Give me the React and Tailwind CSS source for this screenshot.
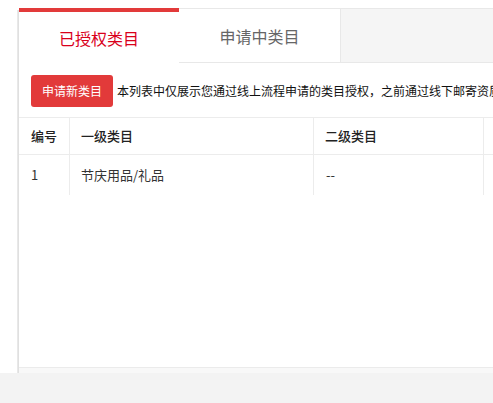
import React from "react";

const rows = [{ id: 1, first: "节庆用品/礼品", second: "--" }];

export default function App() {
  return (
    <div
      className="w-[493px] h-[403px] overflow-hidden bg-white flex flex-col"
      style={{ fontFamily: '"Noto Sans CJK SC", "Noto Sans", sans-serif' }}
    >
      <div className="flex-1 flex pl-[17px] pt-[8px] min-h-0">
        <div className="w-[2px] mt-[2px] bg-gradient-to-r from-[#ececec] to-[#dcdcdc]" />
        <div className="flex-1 flex flex-col min-w-0">
          {/* tabs */}
          <div className="flex h-[55px] shrink-0">
            <div className="w-[160px] border-t-4 border-[#e23a3a] bg-white flex items-center justify-center text-[16px] text-[#d9001b]">
              已授权类目
            </div>
            <div className="w-[162px] border-t border-b border-r border-[#e8e8e8] bg-white flex items-center justify-center text-[16px] text-[#666]">
              申请中类目
            </div>
            <div className="flex-1 border-t border-b border-[#e8e8e8] bg-[#f5f5f5]" />
          </div>

          {/* content */}
          <div className="h-[304px] bg-white flex flex-col">
            <div className="flex items-center gap-[4px] pl-[12px] pt-[12px] whitespace-nowrap">
              <button className="h-[32px] w-[82px] shrink-0 rounded-[3px] bg-[#e23a3a] text-white text-[12px]">
                申请新类目
              </button>
              <span className="text-[12px] text-[#111]">
                本列表中仅展示您通过线上流程申请的类目授权，之前通过线下邮寄资质申请的类目请联系客服查看
              </span>
            </div>
            <div className="mt-[10px] w-[600px]">
              <div className="flex h-[38px] border-t border-b border-[#ececec] text-[13px] text-[#222] font-medium">
                <div className="w-[51px] pl-[12px] flex items-center border-r border-[#ececec]">编号</div>
                <div className="w-[244px] pl-[11px] flex items-center border-r border-[#ececec]">一级类目</div>
                <div className="w-[170px] pl-[11px] flex items-center border-r border-[#ececec]">二级类目</div>
                <div className="flex-1" />
              </div>
              {rows.map((r) => (
                <div key={r.id} className="flex h-[40px] text-[13px] text-[#333]">
                  <div className="w-[51px] pl-[12px] flex items-center border-r border-[#ececec]">{r.id}</div>
                  <div className="w-[244px] pl-[11px] flex items-center border-r border-[#ececec]">{r.first}</div>
                  <div className="w-[170px] pl-[12px] flex items-center border-r border-[#ececec]">{r.second}</div>
                  <div className="flex-1" />
                </div>
              ))}
            </div>
          </div>
          <div className="flex-1 border-t border-[#ebebeb] bg-[#f8f8f8]" />
        </div>
      </div>
      <div className="h-[30px] shrink-0 bg-[#f3f3f3]" />
    </div>
  );
}
